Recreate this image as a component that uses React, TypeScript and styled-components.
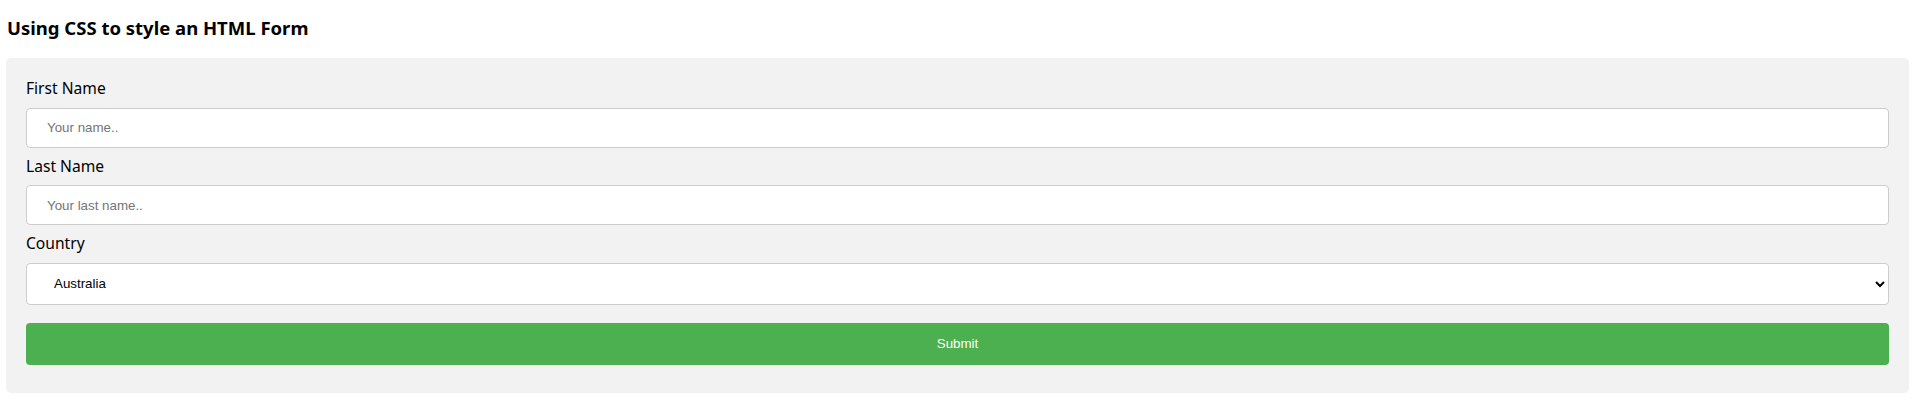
import React from "react";
import styled, { createGlobalStyle } from "styled-components";

const GlobalStyle = createGlobalStyle`
  body {
    margin: 0 9px 0 6px;
    background: #fff;
    color: #000;
    font-family: "Noto Sans", "Open Sans", sans-serif;
  }
`;

const Heading = styled.h3`
  margin: 15px 0 17px 1px;
  font-size: 18.5px;
  line-height: 26px;
  font-weight: 700;
`;

const Panel = styled.div`
  border-radius: 5px;
  background-color: #f2f2f2;
  padding: 20px;
`;

const Label = styled.label`
  display: block;
  font-size: 15.6px;
  line-height: 21.5px;
`;

const fieldBase = `
  display: block;
  width: 100%;
  margin: 8px 0;
  padding: 0 20px;
  border: 1px solid #ccc;
  border-radius: 4px;
  box-sizing: border-box;
  background: #fff;
  font-family: "Liberation Sans", Arial, sans-serif;
  font-size: 13.333px;
  color: #000;
`;

const TextInput = styled.input`
  ${fieldBase}
  height: 40px;
  &::placeholder {
    color: #757575;
  }
`;

const Select = styled.select`
  ${fieldBase}
  height: 42px;
  padding: 0 10px 0 23px;
`;

const SubmitButton = styled.input`
  display: block;
  width: 100%;
  height: 42px;
  margin: 18px 0 8px;
  border: none;
  border-radius: 4px;
  background-color: #4caf50;
  color: #fff;
  font-family: "Liberation Sans", Arial, sans-serif;
  font-size: 13.333px;
  cursor: pointer;
`;

export default function App() {
  return (
    <>
      <GlobalStyle />
      <Heading>Using CSS to style an HTML Form</Heading>
      <Panel>
        <form onSubmit={(e) => e.preventDefault()}>
          <Label htmlFor="fname">First Name</Label>
          <TextInput type="text" id="fname" name="firstname" placeholder="Your name.." />
          <Label htmlFor="lname">Last Name</Label>
          <TextInput type="text" id="lname" name="lastname" placeholder="Your last name.." />
          <Label htmlFor="country">Country</Label>
          <Select id="country" name="country" defaultValue="australia">
            <option value="australia">Australia</option>
            <option value="canada">Canada</option>
            <option value="usa">USA</option>
          </Select>
          <SubmitButton type="submit" value="Submit" />
        </form>
      </Panel>
    </>
  );
}
